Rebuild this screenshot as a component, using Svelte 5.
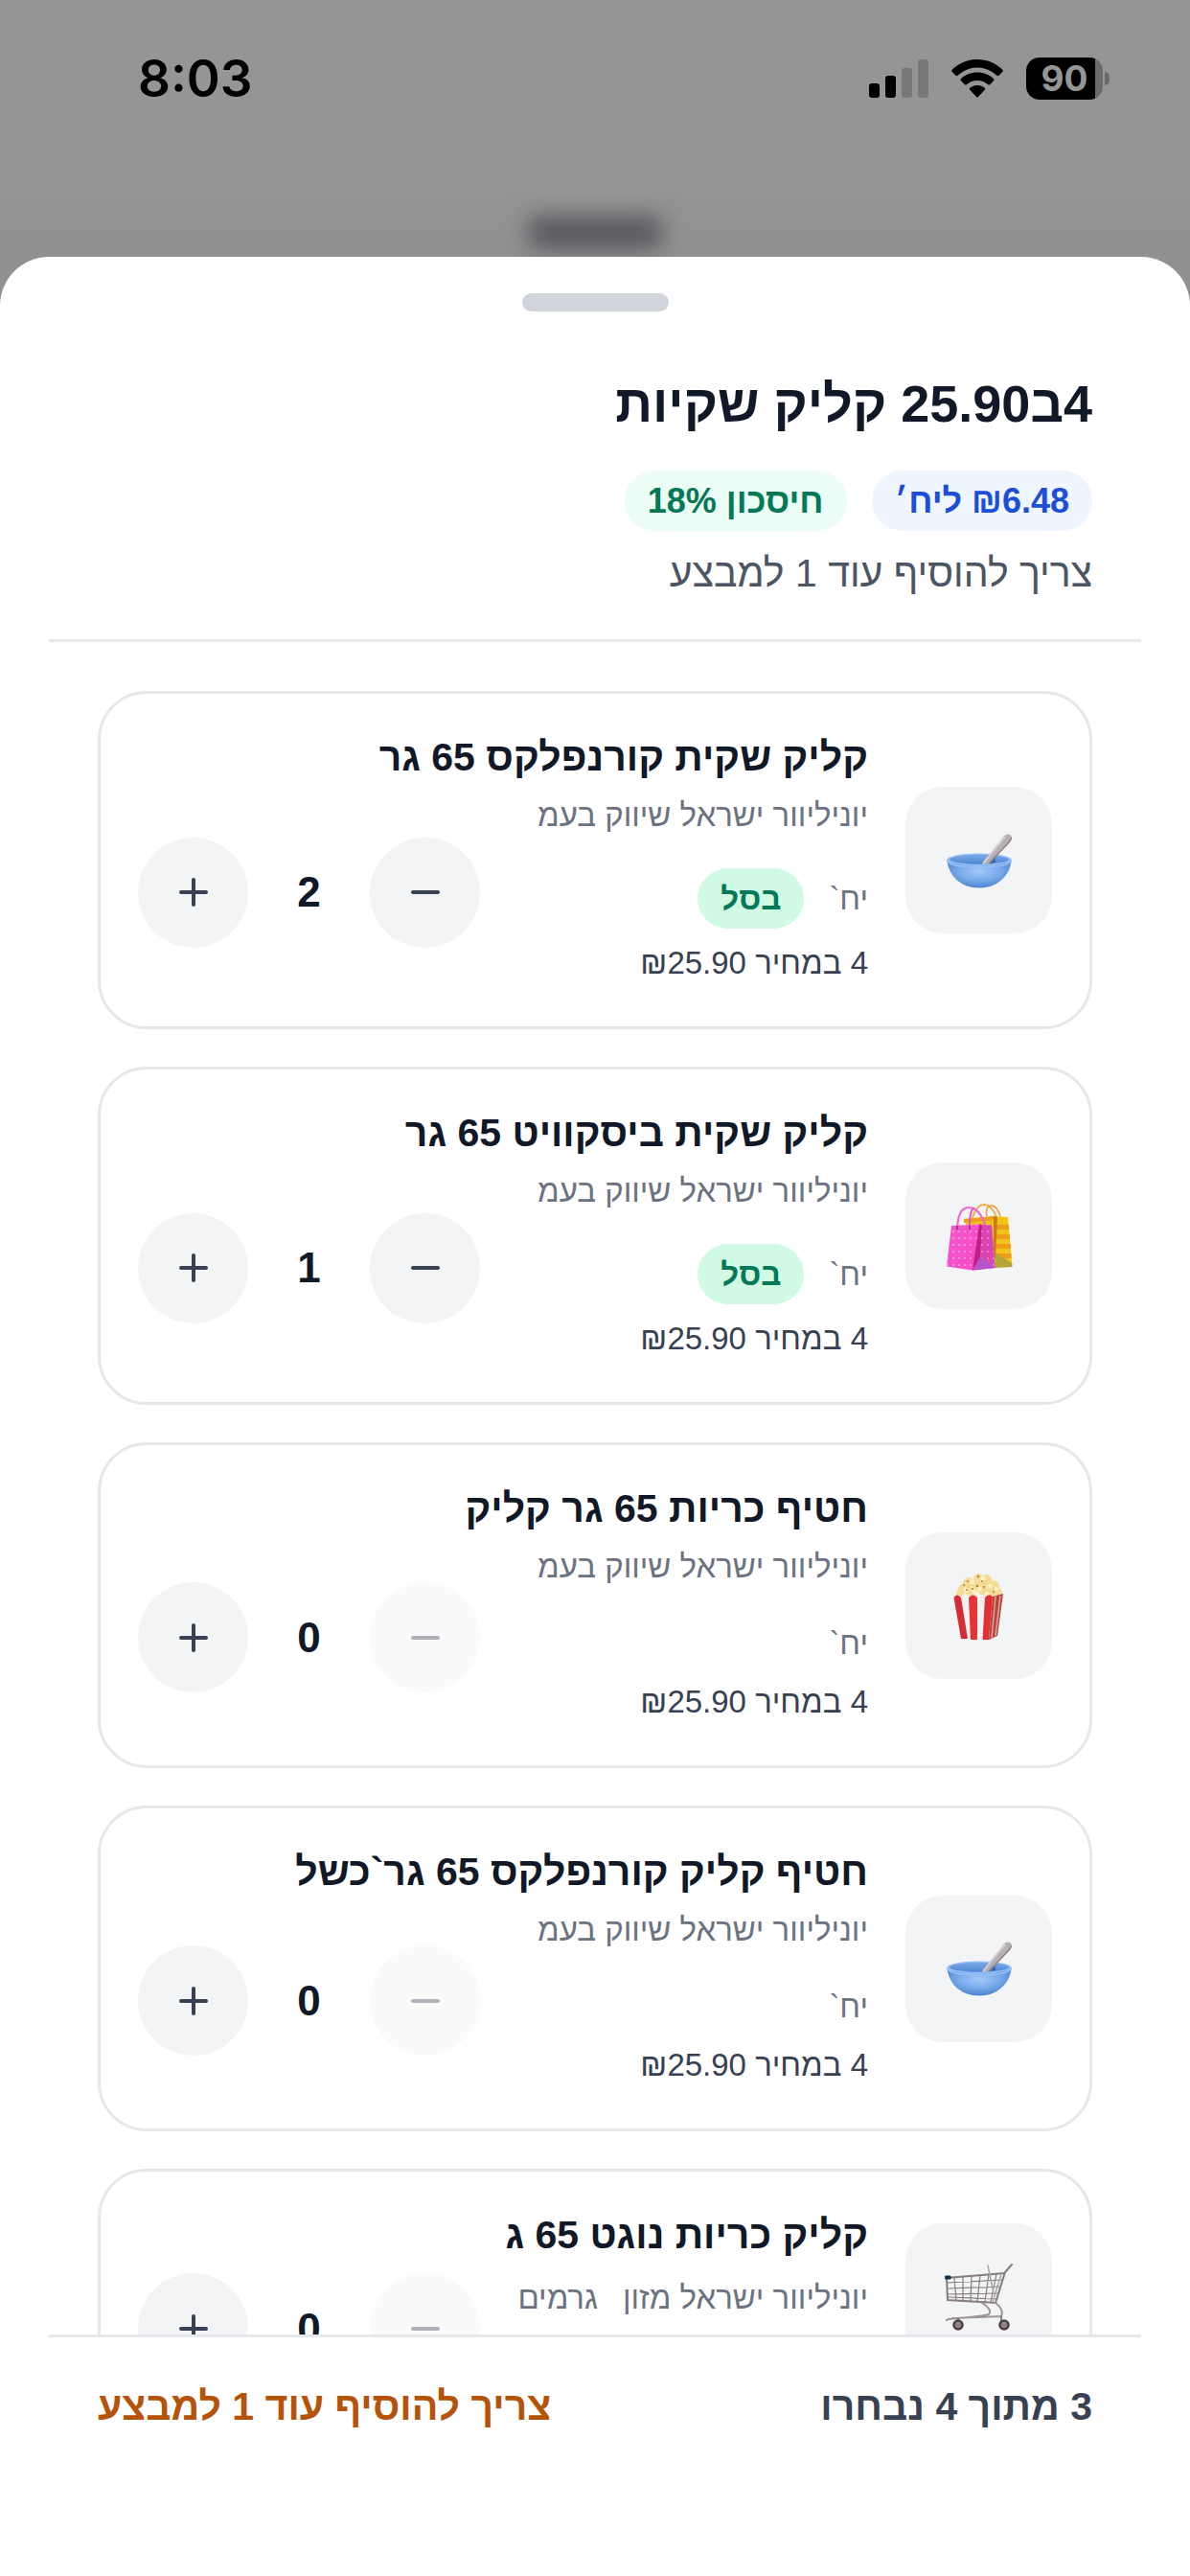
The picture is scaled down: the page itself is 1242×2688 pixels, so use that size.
<script>
  let products = $state([
    { name: 'קליק שקית קורנפלקס 65 גר', vendor: 'יוניליוור ישראל שיווק בעמ', unit: 'יח`', icon: 'bowl', count: 2 },
    { name: 'קליק שקית ביסקוויט 65 גר', vendor: 'יוניליוור ישראל שיווק בעמ', unit: 'יח`', icon: 'bags', count: 1 },
    { name: 'חטיף כריות 65 גר קליק', vendor: 'יוניליוור ישראל שיווק בעמ', unit: 'יח`', icon: 'popcorn', count: 0 },
    { name: 'חטיף קליק קורנפלקס 65 גר`כשל', vendor: 'יוניליוור ישראל שיווק בעמ', unit: 'יח`', icon: 'bowl', count: 0 },
    { name: 'קליק כריות נוגט 65 ג', vendor: 'יוניליוור ישראל מזון', unit: 'גרמים', icon: 'cart', count: 0 }
  ]);
  const needed = 4;
  let selected = $derived(products.reduce((sum, p) => sum + p.count, 0));
  let missing = $derived(Math.max(0, needed - selected));
  let hint = $derived(missing > 0 ? `צריך להוסיף עוד ${missing} למבצע` : 'המבצע הושלם');
</script>

{#snippet bowl()}
  <svg class="art" viewBox="0 0 72 72" aria-hidden="true">
    <defs>
      <radialGradient id="bowl-body" cx="0.5" cy="0.4" r="0.6">
        <stop offset="0" stop-color="#a3c9f8" />
        <stop offset="0.55" stop-color="#78aaea" />
        <stop offset="1" stop-color="#4a82cd" />
      </radialGradient>
      <linearGradient id="bowl-in" x1="0" y1="0" x2="0" y2="1">
        <stop offset="0" stop-color="#7ba9e6" />
        <stop offset="1" stop-color="#4f86d3" />
      </linearGradient>
    </defs>
    <path d="M2.500 35.500C4 53 18 64.500 36 64.500S68 53 69.500 35.500Z" fill="url(#bowl-body)" />
    <ellipse cx="36" cy="35" rx="33.500" ry="6.500" fill="#93bff6" />
    <ellipse cx="36" cy="34.800" rx="31" ry="5" fill="url(#bowl-in)" />
    <path d="M45 39L52.500 31.500 53 38Z" fill="#2f66b4" />
    <path d="M39 40L62 10.500C64 7.500 69.500 7.500 70 12 70 15 67 18 64.500 20.500L46 39.600Z" fill="#b5b0b3" />
    <path d="M40 39L63 11" stroke="#cfcdd0" stroke-width="2" fill="none" />
    <path d="M46 39L65 19Q69 15 69.500 12" stroke="#967f88" stroke-width="1.500" fill="none" />
    <path d="M2.500 35C4 42 20 42.800 36 42.800S68 42 69.500 35" stroke="#93bff6" stroke-width="1.500" fill="none" />
  </svg>
{/snippet}

{#snippet bags()}
  <svg class="art" viewBox="0 0 72 72" aria-hidden="true">
    <defs>
      <pattern id="dots" width="6" height="7" patternUnits="userSpaceOnUse">
        <circle cx="3" cy="3" r="1.100" fill="#ff9fe2" />
      </pattern>
      <linearGradient id="pink" x1="0" y1="0" x2="1" y2="1">
        <stop offset="0" stop-color="#f256cd" />
        <stop offset="1" stop-color="#fa48c4" />
      </linearGradient>
    </defs>
    <path d="M29 17Q33 3 41 3T54 16" stroke="#f5b04a" stroke-width="2" fill="none" />
    <path d="M44 15Q42 5 48 4T58 15" stroke="#e89a33" stroke-width="1.500" fill="none" />
    <path d="M20 18L52 15 66 16 70.500 68 40 69Z" fill="#efc51c" />
    <path d="M20 18L52 15 53 19 20 22ZM52 24H67V29H52ZM52 34H68V39H52ZM52 44H69V49H52ZM52 54H69.500V59H52Z" fill="#ee9d19" />
    <path d="M51 15L55 16 53 58 51 62Z" fill="#c97a12" />
    <path d="M53 53L70 64 70.500 68 52 69Z" fill="#b3a538" />
    <path d="M7 25L37 23.500 49 24.500 52.500 69 29 71.500 2 67.500Z" fill="url(#pink)" />
    <path d="M7 25L36 23.500 29 71.500 2 67.500Z" fill="url(#dots)" />
    <path d="M36 23.500L39 24 37 60 29 71.500Z" fill="#c31e82" />
    <path d="M39 24L49 24.500 52.500 69 37 57Z" fill="#d945b3" />
    <path d="M39 24L49 24.500 52.500 69 37 57Z" fill="url(#dots)" opacity="0.700" />
    <path d="M37 57L52.500 69 29 71.500Z" fill="#b554c9" />
    <path d="M13 28Q14 6 25 6 36 6 42 24" stroke="#ee6bd0" stroke-width="2.200" fill="none" />
    <path d="M26 28Q26 6 31 7" stroke="#dd55bd" stroke-width="2" fill="none" />
    <path d="M13 25V29M26 25V29" stroke="#8d2e5c" stroke-width="1.500" />
  </svg>
{/snippet}

{#snippet popcorn()}
  <svg class="art" viewBox="0 0 72 72" aria-hidden="true">
    <g fill="#f3dc93">
      <circle cx="35" cy="8" r="5" /><circle cx="25" cy="13" r="6" /><circle cx="43" cy="10" r="6" />
      <circle cx="19" cy="19" r="5" /><circle cx="34" cy="15" r="7" /><circle cx="51" cy="16" r="6" />
      <circle cx="16" cy="24" r="4" /><circle cx="27" cy="21" r="6" /><circle cx="42" cy="20" r="7" />
      <circle cx="55" cy="23" r="5" /><circle cx="48" cy="23" r="5" />
    </g>
    <g fill="#fbf0c4">
      <circle cx="29" cy="12" r="2.500" /><circle cx="40" cy="8" r="2.500" /><circle cx="47" cy="16" r="2.500" />
      <circle cx="22" cy="20" r="2.500" /><circle cx="36" cy="19" r="2.500" /><circle cx="31" cy="22" r="2.500" />
      <circle cx="44" cy="24" r="2.500" /><circle cx="54" cy="19" r="2" />
    </g>
    <g fill="#b98236">
      <circle cx="35" cy="6" r="1.300" /><circle cx="24" cy="11" r="1.100" /><circle cx="34" cy="16" r="1.300" />
      <circle cx="41" cy="17" r="1.100" /><circle cx="20" cy="15" r="1.100" /><circle cx="29" cy="19" r="1" />
      <circle cx="23" cy="20" r="1" /><circle cx="51" cy="22" r="1.100" /><circle cx="39" cy="11" r="1" />
    </g>
    <path d="M9.500 27L56 26 61 24 55 68 49 71.500 17 71Z" fill="#f4f1f0" />
    <path d="M9.500 28Q13 23 17 28L24 71 17 71Z" fill="#d62c35" />
    <path d="M25 28Q29 23 34 28V72H27Z" fill="#e53338" />
    <path d="M42 28Q46 23 50 27L46 72H39.500Z" fill="#e22f35" />
    <path d="M50 27L61 24 55 68 46 72Z" fill="#b8433f" />
    <path d="M53 27L49 70M58 26L53 68" stroke="#d9a795" stroke-width="1.500" fill="none" />
    <path d="M17 28Q21 23 25 28M34 28Q38 23 42 28" stroke="#f4f1f0" stroke-width="2" fill="#f4f1f0" />
  </svg>
{/snippet}

{#snippet cart()}
  <svg class="art" viewBox="0 0 72 72" fill="none" stroke="#857d7c" stroke-linecap="round" aria-hidden="true">
    <path d="M70 3L63 11 53 43 3 40 2 17 62 12" stroke-width="2" />
    <path d="M3 22L60 19M3 28L58 26M3 34L56 33M3 37L55 39M10 17L12 40M19 16V40M28 15L27 41M37 14L34 42M46 13L42 42M54 13L48 42" stroke-width="1.200" />
    <path d="M45 4L51 33M59 13L50 42" stroke="#aaa5a4" stroke-width="1.500" />
    <path d="M39 43Q50 50 46 55 40 57 4 60L2 61M53 43Q62 50 59 57L8 59" stroke="#9d9694" stroke-width="2" />
    <path d="M59 57V62M14 59V62" stroke-width="2" />
    <circle cx="14" cy="66" r="4.500" fill="#8f8785" stroke="#4b4343" stroke-width="2.500" />
    <circle cx="62" cy="66" r="4.500" fill="#8f8785" stroke="#4b4343" stroke-width="2.500" />
    <path d="M1 15H6V18H1Z" fill="#123447" stroke="#123447" />
  </svg>
{/snippet}

<div class="screen">
  <div class="backdrop">
    <header class="status">
      <span class="clock">8:03</span>
      <div class="indicators">
        <svg class="signal" viewBox="0 0 62 40" role="img" aria-label="Signal">
          <rect x="0" y="25" width="11" height="15" rx="3" />
          <rect x="17" y="17" width="11" height="23" rx="3" />
          <rect x="34" y="9" width="11" height="31" rx="3" fill="#777978" />
          <rect x="51" y="0" width="11" height="40" rx="3" fill="#777978" />
        </svg>
        <svg class="wifi" viewBox="0 0 54 40" role="img" aria-label="Wi-Fi">
          <path d="M27 0C37 0 46.500 4 53.300 10.700Q54.300 11.800 53.300 12.900L49.500 16.800Q48.500 17.700 47.500 16.800A29.500 29.500 0 0 0 6.500 16.800Q5.500 17.700 4.500 16.800L.700 12.900Q-.300 11.800 .700 10.700C7.500 4 17 0 27 0Z" />
          <path d="M27 13.500C33.500 13.500 39.500 16 44 20.100Q45 21.200 44 22.300L40.200 26.200Q39.200 27.100 38.100 26.200A16.500 16.500 0 0 0 15.900 26.200Q14.800 27.100 13.800 26.200L10 22.300Q9 21.200 10 20.100C14.500 16 20.500 13.500 27 13.500Z" />
          <path d="M27 27C30 27 32.700 28 34.800 29.700Q35.800 30.700 34.800 31.700L28 38.900Q27 39.900 26 38.900L19.200 31.700Q18.200 30.700 19.200 29.700C21.300 28 24 27 27 27Z" />
        </svg>
        <div class="battery"><span>90</span></div>
      </div>
    </header>
    <div class="behind"></div>
  </div>

  <main class="sheet" dir="rtl">
    <div class="handle"></div>
    <section class="intro">
      <h1>4ב25.90 קליק שקיות</h1>
      <div class="pills">
        <span class="pill blue">₪6.48 ליח׳</span>
        <span class="pill green">חיסכון 18%</span>
      </div>
      <p>{hint}</p>
    </section>

    <ul class="list">
      {#each products as product}
        <li class="card">
          <div class="thumb">
            {#if product.icon === 'bowl'}{@render bowl()}
            {:else if product.icon === 'bags'}{@render bags()}
            {:else if product.icon === 'popcorn'}{@render popcorn()}
            {:else}{@render cart()}{/if}
          </div>
          <div class="body">
            <h2>{product.name}</h2>
            <div class="row">
              <div class="info">
                <div class="meta">
                  <span class="vendor">{product.vendor}</span>
                  <span class="unit">{product.unit}</span>
                  {#if product.count > 0}<span class="badge">בסל</span>{/if}
                </div>
                <div class="price">4 במחיר ₪25.90</div>
              </div>
              <div class="stepper">
                <button type="button" aria-label="הפחתה" disabled={product.count === 0} onclick={() => product.count--}>
                  <svg viewBox="0 0 30 30" aria-hidden="true"><path d="M2 15H28" /></svg>
                </button>
                <output>{product.count}</output>
                <button type="button" aria-label="הוספה" onclick={() => product.count++}>
                  <svg viewBox="0 0 30 30" aria-hidden="true"><path d="M2 15H28M15 2V28" /></svg>
                </button>
              </div>
            </div>
          </div>
        </li>
      {/each}
    </ul>

    <footer>
      <span>{selected} מתוך {needed} נבחרו</span>
      <span class="warn">{hint}</span>
    </footer>
  </main>
</div>

<style>
  :global(body) {
    margin: 0;
  }
  .screen {
    height: 100vh;
    display: flex;
    flex-direction: column;
    background: linear-gradient(#949695 0, #949695 180px, #929191 260px);
    font-family: 'Liberation Sans', Arial, sans-serif;
    color: #111827;
  }
  .backdrop {
    height: 268px;
    flex: none;
    display: flex;
    flex-direction: column;
    justify-content: space-between;
    align-items: center;
  }
  .status {
    align-self: stretch;
    display: flex;
    justify-content: space-between;
    align-items: center;
    height: 44px;
    padding: 60px 84px 0 144px;
  }
  .clock {
    font: 600 53px/44px Inter, sans-serif;
    color: #000;
  }
  .indicators {
    display: flex;
    align-items: center;
    gap: 24px;
  }
  .signal {
    width: 62px;
    height: 40px;
  }
  .wifi {
    width: 54px;
    height: 40px;
  }
  .battery {
    position: relative;
    width: 80px;
    height: 44px;
    margin-right: 7px;
    border-radius: 14px;
    background: linear-gradient(90deg, #000 72px, #6a6c6b 72px);
    color: #949695;
    font: 700 37px/44px Inter, sans-serif;
    text-align: center;
  }
  .battery::after {
    content: '';
    position: absolute;
    left: 82px;
    top: 15px;
    width: 5px;
    height: 14px;
    border-radius: 0 6px 6px 0;
    background: #6a6c6b;
  }
  .behind {
    width: 138px;
    height: 34px;
    margin-bottom: 8px;
    background: #56575d;
    filter: blur(12px);
  }
  .sheet {
    position: relative;
    flex: 1;
    min-height: 0;
    display: flex;
    flex-direction: column;
    padding: 0 51px;
    background: #fff;
    border-radius: 51px 51px 0 0;
  }
  .handle {
    flex: none;
    align-self: center;
    width: 153px;
    height: 19px;
    margin-top: 38px;
    border-radius: 10px;
    background: #d1d5db;
  }
  .intro {
    padding: 60px 51px 42px;
    border-bottom: 3px solid #e5e7eb;
  }
  h1 {
    margin: 0;
    font-size: 54px;
    line-height: 72px;
  }
  .pills {
    display: flex;
    gap: 26px;
    margin-top: 34px;
  }
  .pill {
    padding: 0 24px;
    border-radius: 32px;
    font-size: 36px;
    line-height: 63px;
    font-weight: 700;
  }
  .blue {
    background: #eff6ff;
    color: #1d4ed8;
  }
  .green {
    background: #ecfdf5;
    color: #047857;
  }
  .intro p {
    margin: 17px 0 0;
    font-size: 41px;
    line-height: 54px;
    color: #4b5563;
  }
  .list {
    flex: 1;
    min-height: 0;
    overflow: hidden;
    margin: 0;
    padding: 51px;
    display: flex;
    flex-direction: column;
    gap: 39px;
    list-style: none;
  }
  .card {
    flex: none;
    display: flex;
    align-items: center;
    gap: 39px;
    padding: 39px;
    border: 3px solid #e5e7eb;
    border-radius: 51px;
  }
  .thumb {
    flex: none;
    display: flex;
    align-items: center;
    justify-content: center;
    width: 153px;
    height: 153px;
    border-radius: 39px;
    background: #f3f4f6;
  }
  .art {
    width: 72px;
    height: 72px;
  }
  .body {
    flex: 1;
    min-width: 0;
  }
  h2 {
    margin: 0 0 13px;
    font-size: 41px;
    line-height: 54px;
  }
  .row {
    display: flex;
    align-items: center;
    gap: 24px;
  }
  .info {
    flex: 1;
    min-width: 0;
    padding-bottom: 3px;
  }
  .meta {
    display: flex;
    flex-wrap: wrap;
    align-items: center;
    gap: 34px 26px;
    font-size: 33px;
    color: #6b7280;
  }
  .vendor {
    line-height: 42px;
  }
  .unit {
    line-height: 50px;
  }
  .badge {
    padding: 0 24px;
    border-radius: 32px;
    background: #d1fae5;
    color: #047857;
    font-weight: 700;
    line-height: 63px;
  }
  .price {
    margin-top: 12px;
    font-size: 33px;
    line-height: 48px;
    color: #374151;
  }
  .stepper {
    flex: none;
    display: flex;
    align-items: center;
  }
  .stepper button {
    display: flex;
    align-items: center;
    justify-content: center;
    width: 115px;
    height: 115px;
    padding: 0;
    border: 0;
    border-radius: 50%;
    background: #f3f4f6;
  }
  .stepper button:disabled {
    opacity: 0.4;
  }
  .stepper svg {
    width: 30px;
    height: 30px;
    fill: none;
    stroke: #374151;
    stroke-width: 4;
    stroke-linecap: round;
  }
  output {
    width: 127px;
    text-align: center;
    font-size: 44px;
    font-weight: 700;
  }
  footer {
    display: flex;
    justify-content: space-between;
    padding: 45px 51px 150px;
    border-top: 3px solid #e5e7eb;
    font-size: 41px;
    line-height: 54px;
    font-weight: 700;
    color: #374151;
  }
  .warn {
    color: #b45309;
  }
</style>
